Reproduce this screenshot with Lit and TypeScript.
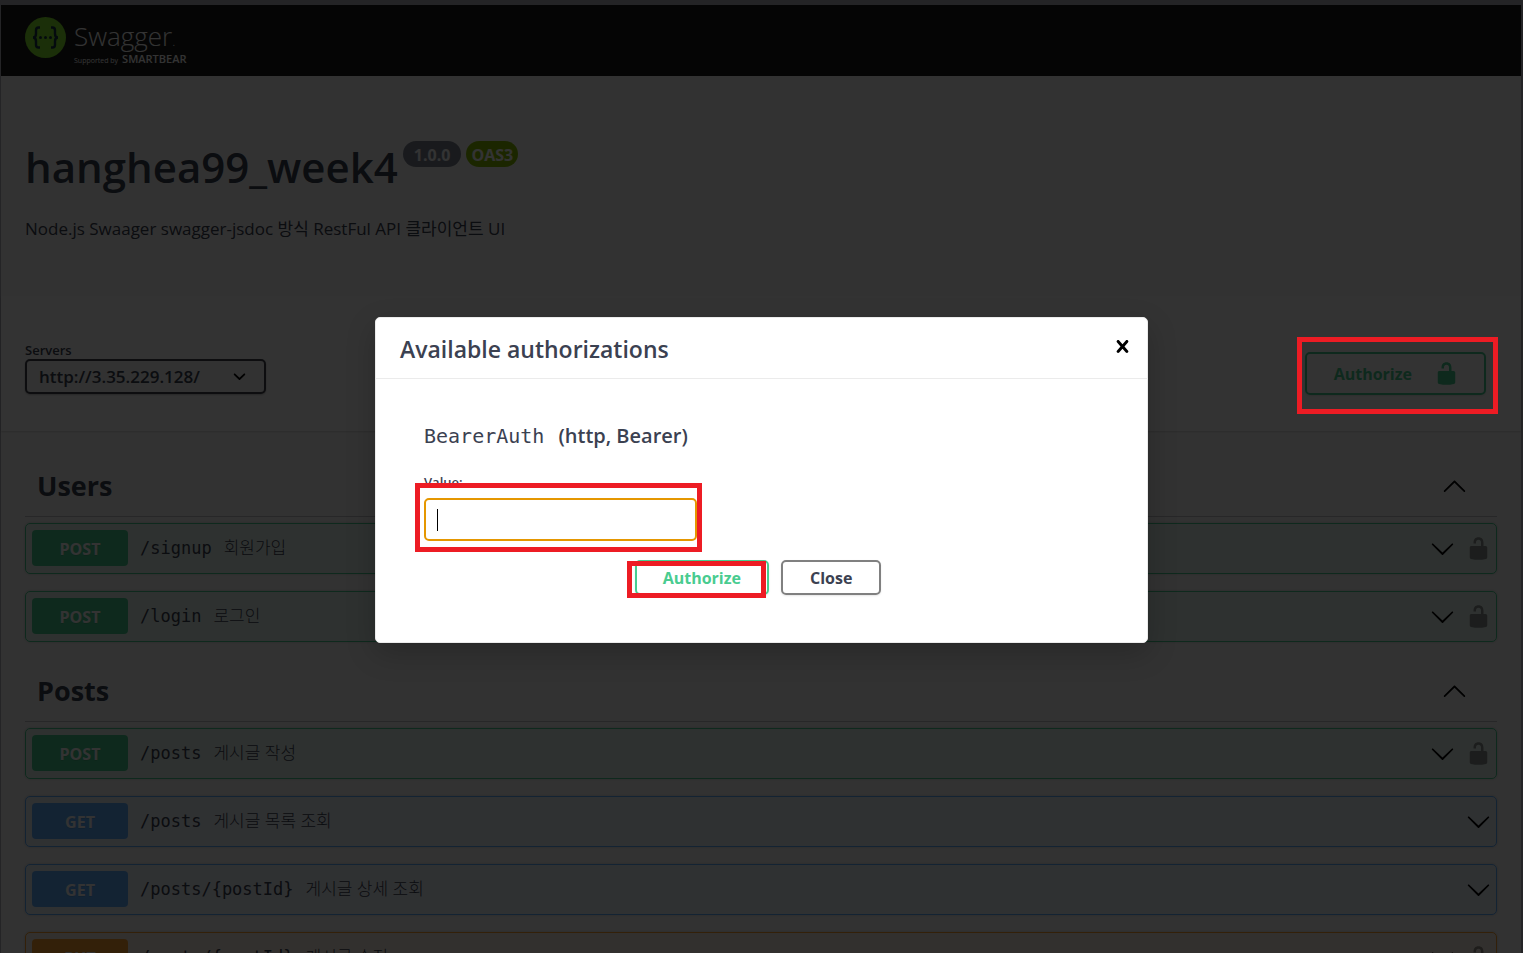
import { LitElement, html, css, svg, nothing } from "lit";
import { customElement, property } from "lit/decorators.js";
import { classMap } from "lit/directives/class-map.js";

type Method = "post" | "get" | "put";

interface Operation {
  method: Method;
  path: string;
  summary: string;
  secured: boolean;
}

interface Tag {
  name: string;
  operations: Operation[];
}

const TAGS: Tag[] = [
  {
    name: "Users",
    operations: [
      { method: "post", path: "/signup", summary: "회원가입", secured: true },
      { method: "post", path: "/login", summary: "로그인", secured: true },
    ],
  },
  {
    name: "Posts",
    operations: [
      { method: "post", path: "/posts", summary: "게시글 작성", secured: true },
      { method: "get", path: "/posts", summary: "게시글 목록 조회", secured: false },
      { method: "get", path: "/posts/{postId}", summary: "게시글 상세 조회", secured: false },
      { method: "put", path: "/posts/{postId}", summary: "게시글 수정", secured: true },
    ],
  },
];

const glyphs = {
  unlocked: svg`<path d="M15.8 8H14V5.6C14 2.703 12.665 1 10 1 7.334 1 6 2.703 6 5.6V6h2v-.801C8 3.754 8.797 3 10 3c1.203 0 2 .754 2 2.199V8H4c-.553 0-1 .646-1 1.199V17c0 .549.428 1.139.951 1.307l1.197.387C5.672 18.861 6.55 19 7.1 19h5.8c.549 0 1.428-.139 1.951-.307l1.196-.387c.524-.167.953-.757.953-1.306V9.199C17 8.646 16.352 8 15.8 8z"/>`,
  close: svg`<path d="M14.348 14.849c-.469.469-1.229.469-1.697 0L10 11.819l-2.651 3.029c-.469.469-1.229.469-1.697 0-.469-.469-.469-1.229 0-1.697l2.758-3.15-2.759-3.152c-.469-.469-.469-1.228 0-1.697.469-.469 1.228-.469 1.697 0L10 8.183l2.651-3.031c.469-.469 1.228-.469 1.697 0 .469.469.469 1.229 0 1.697l-2.758 3.152 2.758 3.15c.469.469.469 1.229 0 1.698z"/>`,
  down: svg`<path d="M17.418 6.109c.272-.268.709-.268.979 0s.271.701 0 .969l-7.908 7.83c-.27.268-.707.268-.979 0l-7.908-7.83c-.27-.268-.27-.701 0-.969.271-.268.709-.268.979 0L10 13.25l7.418-7.141z"/>`,
  up: svg`<path d="M17.418 14.908c.272.268.709.268.979 0s.271-.701 0-.969l-7.908-7.83c-.27-.268-.707-.268-.979 0l-7.908 7.83c-.27.268-.27.701 0 .969.271.268.709.268.979 0L10 7.767l7.418 7.141z"/>`,
  caret: svg`<path d="M13.418 7.859c.271-.268.709-.268.978 0 .27.268.272.701 0 .969l-3.908 3.83c-.27.268-.707.268-.979 0l-3.908-3.83c-.27-.267-.27-.701 0-.969.271-.268.709-.268.978 0L10 11l3.418-3.141z"/>`,
};

const icon = (name: keyof typeof glyphs) =>
  html`<svg class="icon" viewBox="0 0 20 20" aria-hidden="true">${glyphs[name]}</svg>`;

const iconStyles = css`
  .icon {
    display: block;
    width: 25px;
    height: 25px;
    flex: none;
    fill: currentColor;
  }
`;

@customElement("operation-row")
export class OperationRow extends LitElement {
  @property({ attribute: false }) operation!: Operation;

  static styles = [
    iconStyles,
    css`
      :host {
        display: block;
      }
      * {
        box-sizing: border-box;
      }
      .row {
        display: flex;
        align-items: center;
        gap: 12px;
        width: 100%;
        height: 51px;
        padding: 0 5px 1px 6px;
        border: 1px solid;
        border-radius: 5px;
        box-shadow: 0 0 3px rgba(0, 0, 0, 0.19);
      }
      .post {
        border-color: #49cc90;
        background: rgba(73, 204, 144, 0.1);
      }
      .get {
        border-color: #61affe;
        background: rgba(97, 175, 254, 0.1);
      }
      .put {
        border-color: #fca130;
        background: rgba(252, 161, 48, 0.1);
      }
      .method {
        width: 96px;
        height: 36px;
        border-radius: 4px;
        font-size: 16px;
        font-weight: 700;
        line-height: 38px;
        text-align: center;
        color: #fff;
        text-shadow: 0 1px 0 rgba(0, 0, 0, 0.1);
      }
      .post .method {
        background: #49cc90;
      }
      .get .method {
        background: #61affe;
      }
      .put .method {
        background: #fca130;
      }
      .path {
        font-family: "DejaVu Sans Mono", monospace;
        font-size: 17px;
        color: #3b4151;
      }
      .summary {
        flex: 1;
        font-size: 17px;
        font-weight: 300;
        line-height: 24px;
        color: #3b4151;
      }
      .controls {
        display: flex;
        gap: 11px;
      }
      button {
        margin: 0;
        padding: 0;
        border: 0;
        background: none;
        color: #000;
      }
      .lock {
        color: rgba(0, 0, 0, 0.4);
      }
    `,
  ];

  render() {
    const { method, path, summary, secured } = this.operation;
    return html`
      <div class=${classMap({ row: true, [method]: true })}>
        <span class="method">${method.toUpperCase()}</span>
        <span class="path">${path}</span>
        <span class="summary">${summary}</span>
        <span class="controls">
          <button aria-label="Expand operation">${icon("down")}</button>
          ${secured
            ? html`<button class="lock" aria-label="Authorization">${icon("unlocked")}</button>`
            : nothing}
        </span>
      </div>
    `;
  }
}

@customElement("app-root")
export class AppRoot extends LitElement {
  static styles = [
    iconStyles,
    css`
      :host {
        display: block;
        position: relative;
        height: 100vh;
        overflow: hidden;
        font-family: "Open Sans", "Noto Sans CJK KR", sans-serif;
        color: #3b4151;
      }
      * {
        box-sizing: border-box;
      }
      h1,
      h2,
      h3,
      h4,
      p {
        margin: 0;
      }
      button,
      select,
      input {
        margin: 0;
        font-family: inherit;
        color: inherit;
      }
      .page {
        min-height: 100%;
        background: #fafafa;
        border: solid #b4b4be;
        border-width: 5px 2px 0 1px;
      }
      .topbar {
        display: flex;
        align-items: flex-start;
        height: 71px;
        padding: 12px 24px 0;
        background: #1b1b1b;
      }
      .brand {
        display: flex;
        gap: 8px;
        color: #fff;
        text-decoration: none;
      }
      .mark {
        display: block;
        width: 41px;
        height: 41px;
      }
      .name {
        display: block;
        padding-top: 2px;
        font-size: 26px;
        font-weight: 300;
        line-height: 34px;
      }
      .name small {
        font-size: 13px;
        line-height: 1;
      }
      .backer {
        display: flex;
        align-items: baseline;
        gap: 4px;
        font-size: 7px;
        line-height: 12px;
      }
      .backer strong {
        font-size: 11px;
        font-weight: 600;
      }
      .info {
        padding: 62px 24px 54px;
      }
      .heading {
        display: flex;
        align-items: flex-start;
        gap: 5px;
      }
      h1 {
        font-size: 42px;
        font-weight: 600;
        line-height: 58px;
      }
      .badge {
        height: 26px;
        margin-top: 3px;
        padding: 0 11px;
        border-radius: 26px;
        background: #7d8492;
        color: #fff;
        font-size: 16px;
        font-weight: 700;
        line-height: 28px;
      }
      .oas {
        padding: 0 5px;
        background: #89bf04;
      }
      .description {
        margin-top: 20px;
        font-size: 17px;
        line-height: 26px;
      }
      .scheme {
        display: flex;
        justify-content: space-between;
        align-items: flex-end;
        height: 135px;
        padding: 0 35px 36px 24px;
        background: #fff;
        box-shadow: 0 1px 2px rgba(0, 0, 0, 0.15);
      }
      .servers {
        display: grid;
        width: 241px;
        padding-bottom: 1px;
      }
      .servers label {
        font-size: 13px;
        font-weight: 600;
        line-height: 18px;
      }
      .select {
        display: grid;
        align-items: center;
      }
      .select > * {
        grid-area: 1 / 1;
      }
      .select .icon {
        justify-self: end;
        margin-right: 14px;
        color: #000;
        pointer-events: none;
      }
      select {
        width: 100%;
        height: 35px;
        padding: 0 40px 0 12px;
        appearance: none;
        border: 2px solid #41444e;
        border-radius: 5px;
        background: #f7f7f7;
        box-shadow: 0 1px 2px rgba(0, 0, 0, 0.25);
        font-size: 17px;
        font-weight: 600;
      }
      .marked {
        position: relative;
      }
      .marked::after {
        content: "";
        position: absolute;
        z-index: 3;
        border: 5px solid #ed1c24;
        pointer-events: none;
      }
      .mark-open::after {
        inset: -15px -12px -19px -8px;
      }
      .mark-value::after {
        inset: -15px -5px -11px -9px;
      }
      .mark-submit::after {
        inset: 1px 3px -3px -8px;
      }
      .btn {
        display: block;
        height: 35px;
        padding: 0 27px;
        border: 2px solid #808080;
        border-radius: 5px;
        background: transparent;
        box-shadow: 0 1px 2px rgba(0, 0, 0, 0.1);
        font-size: 16px;
        font-weight: 700;
      }
      .authorize {
        padding: 0 26px;
        border-color: #49cc90;
        color: #49cc90;
      }
      .open {
        display: flex;
        align-items: center;
        gap: 22px;
        height: 43px;
        padding: 0 25px 0 27px;
      }
      .tags {
        display: grid;
        gap: 20px;
        padding: 26px 24px;
      }
      .tag {
        display: flex;
        align-items: center;
        justify-content: space-between;
        height: 60px;
        margin-bottom: 6px;
        padding: 0 30px 2px 12px;
        border-bottom: 1px solid rgba(59, 65, 81, 0.3);
      }
      h2 {
        font-size: 27px;
        font-weight: 700;
        line-height: 40px;
      }
      .bare {
        padding: 0;
        border: 0;
        background: none;
        color: #000;
      }
      .operations {
        display: grid;
        gap: 17px;
      }
      .overlay {
        position: absolute;
        inset: 0;
        z-index: 1;
        display: grid;
        place-items: center;
        padding-top: 7px;
        background: rgba(0, 0, 0, 0.8);
      }
      .modal {
        width: 773px;
        max-width: 100%;
        border: 1px solid #ebebeb;
        border-radius: 5px;
        background: #fff;
        box-shadow: 0 10px 30px rgba(0, 0, 0, 0.2);
      }
      .modal-head {
        display: flex;
        align-items: center;
        justify-content: space-between;
        height: 61px;
        padding: 0 12px 3px 24px;
        border-bottom: 1px solid #ebebeb;
      }
      h3 {
        padding-top: 4px;
        font-size: 23px;
        font-weight: 600;
        line-height: 32px;
      }
      .modal-body {
        padding: 42px 48px 47px;
      }
      h4 {
        display: flex;
        align-items: baseline;
        gap: 14px;
        font-size: 20px;
        font-weight: 600;
        line-height: 30px;
      }
      code {
        font-family: "DejaVu Sans Mono", monospace;
        font-size: 20px;
        font-weight: 400;
      }
      .value-label {
        display: block;
        margin-top: 21px;
        padding-bottom: 6px;
        font-size: 13px;
        font-weight: 600;
        line-height: 20px;
      }
      .field {
        width: 273px;
      }
      .field input {
        display: block;
        width: 100%;
        height: 43px;
        padding: 0 12px;
        border: 2px solid #e59700;
        border-radius: 5px;
        outline: 0;
        background: #fff;
        font-size: 16px;
        caret-color: transparent;
      }
      .field::before {
        content: "";
        position: absolute;
        left: 13px;
        top: 11px;
        width: 1px;
        height: 22px;
        background: #000;
      }
      .actions {
        display: flex;
        justify-content: center;
        gap: 12px;
        margin-top: 19px;
        padding-right: 7px;
      }
    `,
  ];

  render() {
    return html`
      <div class="page">
        <header class="topbar">
          <a class="brand" href="#">
            <svg class="mark" viewBox="0 0 41 41" aria-hidden="true">
              <circle cx="20.500" cy="20.500" r="20.500" fill="#85ea2d" />
              <g fill="none" stroke="#173647" stroke-width="2.400">
                <path d="M15 10.500h-1.500q-2.500 0-2.500 2.800v3.500q0 3.700-3 3.700 3 0 3 3.700v3.500q0 2.800 2.500 2.800H15" />
                <path d="M26 10.500h1.500q2.500 0 2.500 2.800v3.500q0 3.700 3 3.700-3 0-3 3.700v3.500q0 2.800-2.500 2.800H26" />
              </g>
              <g fill="#173647">
                <circle cx="15.500" cy="20.500" r="1.500" />
                <circle cx="20.500" cy="20.500" r="1.500" />
                <circle cx="25.500" cy="20.500" r="1.500" />
              </g>
            </svg>
            <span>
              <span class="name">Swagger<small>.</small></span>
              <span class="backer">Supported by <strong>SMARTBEAR</strong></span>
            </span>
          </a>
        </header>

        <section class="info">
          <div class="heading">
            <h1>hanghea99_week4</h1>
            <span class="badge">1.0.0</span>
            <span class="badge oas">OAS3</span>
          </div>
          <p class="description">Node.js Swaager swagger-jsdoc 방식 RestFul API 클라이언트 UI</p>
        </section>

        <section class="scheme">
          <div class="servers">
            <label for="servers">Servers</label>
            <div class="select">
              <select id="servers">
                <option>http://3.35.229.128/</option>
              </select>
              ${icon("caret")}
            </div>
          </div>
          <div class="marked mark-open">
            <button class="btn authorize open">Authorize ${icon("unlocked")}</button>
          </div>
        </section>

        <main class="tags">
          ${TAGS.map(
            (tag) => html`
              <section>
                <div class="tag">
                  <h2>${tag.name}</h2>
                  <button class="bare" aria-label="Collapse section">${icon("up")}</button>
                </div>
                <div class="operations">
                  ${tag.operations.map(
                    (operation) => html`<operation-row .operation=${operation}></operation-row>`
                  )}
                </div>
              </section>
            `
          )}
        </main>
      </div>

      <div class="overlay">
        <div class="modal" role="dialog" aria-labelledby="dialog-title">
          <div class="modal-head">
            <h3 id="dialog-title">Available authorizations</h3>
            <button class="bare" aria-label="Close dialog">${icon("close")}</button>
          </div>
          <div class="modal-body">
            <h4><code>BearerAuth</code> <span>(http, Bearer)</span></h4>
            <label class="value-label" for="token">Value:</label>
            <div class="field marked mark-value">
              <input id="token" type="text" />
            </div>
            <div class="actions">
              <div class="marked mark-submit">
                <button class="btn authorize">Authorize</button>
              </div>
              <button class="btn">Close</button>
            </div>
          </div>
        </div>
      </div>
    `;
  }
}
